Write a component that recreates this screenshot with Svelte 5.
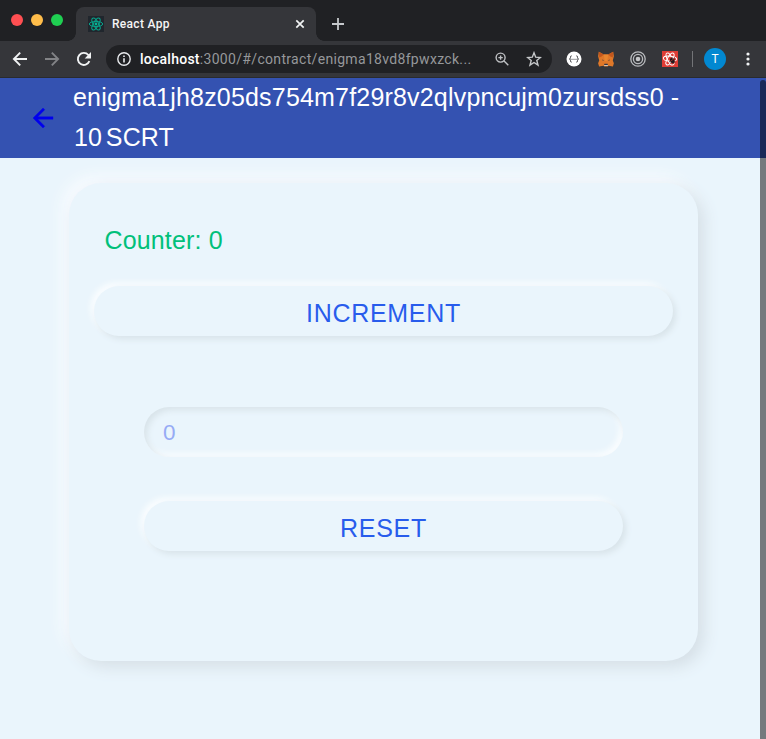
<script>
  let count = $state(0);
  let draft = $state('');
  const lights = ['#ff4f52', '#ffbd4a', '#1fcf52'];
</script>

<div class="browser">
  <div class="tabs">
    <div class="lights">
      {#each lights as color}<i style:background={color}></i>{/each}
    </div>
    <div class="tab">
      <svg class="favicon" viewBox="0 0 16 16">
        <path fill="#20262d" d="M0 0h16v16H0z" />
        <g fill="none" stroke="#08a58c" stroke-width="1">
          <ellipse cx="8" cy="8" rx="6.7" ry="2.6" />
          <ellipse cx="8" cy="8" rx="6.7" ry="2.6" transform="rotate(60 8 8)" />
          <ellipse cx="8" cy="8" rx="6.7" ry="2.6" transform="rotate(120 8 8)" />
        </g>
        <circle cx="8" cy="8" r="1.4" fill="#08b597" />
      </svg>
      <span class="tab-title">React App</span>
      <svg class="close" viewBox="0 0 10 10"><path d="m1.3 1.3 7.4 7.4m0-7.4L1.3 8.7" fill="none" stroke="#f1f3f4" stroke-width="1.7" /></svg>
    </div>
    <svg class="plus" viewBox="0 0 12 12"><path d="M6 0v12M0 6h12" stroke="#c6c9cc" stroke-width="1.8" /></svg>
  </div>

  <div class="toolbar">
    <svg class="nav" viewBox="0 0 16 16"><path d="M15 8H2.2m6-6.3L1.9 8l6.3 6.3" fill="none" stroke="#f1f3f4" stroke-width="1.9" /></svg>
    <svg class="nav" viewBox="0 0 16 16"><path d="M1 8h12.8m-6-6.3L14.1 8l-6.3 6.3" fill="none" stroke="#828386" stroke-width="1.9" /></svg>
    <svg class="nav" viewBox="0 0 16 16"><path d="M13.4 10.2A6 6 0 1 1 12.4 4l1.4 1.5" fill="none" stroke="#f1f3f4" stroke-width="1.9" /><path d="M15 1v6.4H8.7z" fill="#f1f3f4" /></svg>
    <div class="address">
      <svg class="info" viewBox="0 0 14 14"><circle cx="7" cy="7" r="6.2" fill="none" stroke="#e8eaed" stroke-width="1.4" /><path d="M7 6.2v4.3M7 3.4v1.5" stroke="#e8eaed" stroke-width="1.6" /></svg>
      <span class="url"><b>localhost</b>:3000/#/contract/enigma18vd8fpwxzck...</span>
      <svg class="zoomer" viewBox="0 0 14 14"><g fill="none" stroke="#bfc1c4" stroke-width="1.4"><circle cx="5.6" cy="5.6" r="4.5" /><path d="m8.8 8.8 4.5 4.5M5.6 3.4v4.4M3.4 5.6h4.4" /></g></svg>
      <svg class="star" viewBox="0 0 16 16"><path d="m8 1.8 1.7 4.4 4.7.3-3.6 3 1.2 4.6L8 11.5l-4 2.6 1.2-4.6-3.6-3 4.7-.3z" fill="none" stroke="#c6c8ca" stroke-width="1.4" /></svg>
    </div>
    <div class="extensions">
      <svg viewBox="0 0 16 16"><circle cx="8" cy="8" r="7.5" fill="#fff" /><path d="M5.7 4.8q-1.4 0-1.2 1.5.2 1.5-1.1 1.7 1.3.2 1.1 1.7-.2 1.5 1.2 1.5m4.6-6.4q1.4 0 1.2 1.5-.2 1.5 1.1 1.7-1.3.2-1.1 1.7.2 1.5-1.2 1.5" fill="none" stroke="#35363a" stroke-width=".9" /><path d="M5.5 8.3h5" stroke="#35363a" stroke-dasharray="1 1" /></svg>
      <svg viewBox="0 0 16 16">
        <path fill="#df7829" d="m.8.8 5 2.7h4.4l5-2.7.7 4.4-1.1 4.2 1.1 2.8-1 3.2-4.3-.7-1 .8H6.4l-1-.8-4.3.7-1-3.2 1.1-2.8L.1 5.2z" />
        <path fill="#c3571d" d="m.8.8 5 2.7-2.2 2-2.4 1zm14.4 0-5 2.7 2.2 2 2.4 1z" />
        <path fill="#e9862f" d="M5.8 3.5h4.4L9.4 10H6.6z" />
        <path fill="#303747" d="m4.3 8.4 2 1-1.8.2zm7.4 0-2 1 1.8.2zM6.4 12.8h3.2l.3 1.3H6.1z" />
        <path fill="#d5c6b8" d="M5.9 14h4.2l-.5 1.1H6.4z" />
      </svg>
      <svg viewBox="0 0 16 16"><g fill="none" stroke="#b9bbbe" stroke-width="1.3"><circle cx="8" cy="8" r="7.2" /><circle cx="8" cy="8" r="4.6" /></g><circle cx="8" cy="8" r="2.3" fill="#c5c6c8" /></svg>
      <svg viewBox="0 0 16 16">
        <path fill="#df3d35" d="M0 0h16v16H0z" />
        <g fill="none" stroke="#fff" stroke-width="1"><ellipse cx="8" cy="7.7" rx="6.7" ry="2.5" transform="rotate(5 8 8)" /><ellipse cx="8" cy="8" rx="6.7" ry="2.5" transform="rotate(62 8 8)" /><ellipse cx="8" cy="8" rx="6.7" ry="2.5" transform="rotate(120 8 8)" /></g>
        <path d="m7.8 7.5 5.4 4M12.6 6.4l-4.2 6.2M7.3 10.5l5.7-1.8M9.7 6l1.6 7" stroke="#35191a" stroke-width=".8" />
        <ellipse cx="10.3" cy="9.7" rx="1.9" ry="2.8" transform="rotate(-35 10.3 9.7)" fill="#241719" /><path d="m8.7 10 3-2" stroke="#df3d35" stroke-width=".6" />
      </svg>
    </div>
    <i class="divider"></i>
    <div class="avatar">T</div>
    <svg class="menu" viewBox="0 0 4 14"><g fill="#f1f3f4"><circle cx="2" cy="2" r="1.6" /><circle cx="2" cy="7" r="1.6" /><circle cx="2" cy="12" r="1.6" /></g></svg>
  </div>

  <div class="page">
    <header>
      <svg class="back" viewBox="0 0 24 24"><path d="M20 11H7.83l5.59-5.59L12 4l-8 8 8 8 1.41-1.41L7.83 13H20z" fill="#0000ee" stroke="#0000ee" stroke-width=".3" /></svg>
      <h1><span class="account">enigma1jh8z05ds754m7f29r8v2qlvpncujm0zursdss0 -</span><br /><span class="balance">10 SCRT</span></h1>
    </header>
    <main>
      <section class="card">
        <p class="counter">Counter: {count}</p>
        <button class="increment" onclick={() => count++}>INCREMENT</button>
        <div class="form">
          <input placeholder="0" bind:value={draft} />
          <button class="reset" onclick={() => (count = Number(draft) || 0)}>RESET</button>
        </div>
      </section>
    </main>
    <i class="scrollbar"></i>
  </div>
</div>

<style>
  :global(body) { background: #eaf5fc; overflow: hidden; }
  * { box-sizing: border-box; }
  svg { display: block; flex: none; }
  .browser { width: 766px; height: 739px; display: flex; flex-direction: column; overflow: hidden; font-family: "Liberation Sans", Arial, sans-serif; }
  .tabs { height: 41px; background: #202124; display: flex; flex: none; }
  .lights { display: flex; gap: 8px; padding: 14px 0 0 11px; width: 76px; flex: none; }
  .lights i { width: 12px; height: 12px; border-radius: 50%; }
  .tab { position: relative; width: 240px; margin-top: 7px; height: 34px; background: #35363a; border-radius: 8px 8px 0 0; display: flex; align-items: center; padding: 0 11px 0 12px; }
  .tab::before, .tab::after { content: ""; position: absolute; bottom: 0; width: 8px; height: 8px; }
  .tab::before { left: -8px; background: radial-gradient(circle at 0 0, transparent 7.5px, #35363a 8px); }
  .tab::after { right: -8px; background: radial-gradient(circle at 100% 0, transparent 7.5px, #35363a 8px); }
  .favicon { width: 16px; height: 16px; }
  .tab-title { margin-left: 8px; font: 500 12px/16px Roboto, sans-serif; color: #f5f5f6; letter-spacing: .3px; }
  .close { width: 10px; height: 10px; margin-left: auto; }
  .plus { width: 12px; height: 12px; margin: 18px 0 0 16px; }
  .toolbar { height: 37px; background: #35363a; border-bottom: 1px solid #292b2e; display: flex; align-items: center; padding-left: 12px; flex: none; }
  .nav { width: 16px; height: 16px; margin-right: 16px; }
  .address { width: 446px; height: 28px; margin-left: -2px; border-radius: 14px; background: #202124; display: flex; align-items: center; padding: 0 10px 0 11px; }
  .info { width: 14px; height: 14px; }
  .url { margin-left: 9px; font: 14px/20px Roboto, sans-serif; letter-spacing: .32px; color: #96989b; white-space: nowrap; }
  .url b { color: #fff; font-weight: 500; letter-spacing: .25px; }
  .zoomer { width: 14px; height: 14px; margin-left: auto; }
  .star { width: 16px; height: 16px; margin-left: 17px; }
  .extensions { display: flex; gap: 16px; margin-left: 14px; }
  .extensions svg { width: 16px; height: 16px; }
  .divider { width: 1px; height: 16px; background: #737477; margin-left: 14px; }
  .avatar { width: 22px; height: 22px; border-radius: 50%; margin-left: 11px; background: #0288d1; color: #fff; font: 12px/22px Roboto, sans-serif; text-align: center; }
  .menu { width: 4px; height: 14px; margin-left: 19.5px; }
  .page { position: relative; flex: 1; display: flex; flex-direction: column; background: #eaf5fc; }
  header { height: 80px; background: #3452b1; display: flex; align-items: center; padding-left: 28px; color: #fff; flex: none; }
  .back { width: 30px; height: 30px; }
  h1 { margin: 0 0 0 15px; padding-bottom: 2px; font-size: 25px; line-height: 40px; font-weight: 400; white-space: nowrap; }
  .account { letter-spacing: .1875px; }
  .balance { word-spacing: -3.2px; letter-spacing: .1px; margin-left: 1px; }
  main { flex: 1; padding: 25px 68px 78px 69px; display: flex; }
  .card { flex: 1; border-radius: 32px; background: #eaf5fc; box-shadow: 6px 6px 16px #d5dfe6, -6px -6px 16px #fafcff; display: flex; flex-direction: column; padding: 0 25px; }
  .counter { margin: 37px 0 0 10.5px; height: 40px; color: #00c07a; font-size: 25px; line-height: 40px; letter-spacing: .15px; }
  button { height: 50px; border: 0; border-radius: 25px; padding: 3px 0 0; background: #eaf5fc; color: #285cec; font: 25px/40px "Liberation Sans", Arial, sans-serif; letter-spacing: .7px; box-shadow: 3px 3px 6px #d8e3e9, -3px -3px 6px #fcfeff; }
  .increment { margin-top: 26px; }
  .form { display: flex; flex-direction: column; gap: 44px; margin: 71px 50px 0; }
  input { display: block; width: 100%; height: 50px; border: 0; border-radius: 25px; padding: 1px 19px 0; outline: none; background: transparent; color: #285cec; font: 22.5px "Liberation Sans", Arial, sans-serif; box-shadow: inset 3px 3px 6px #d8e3e9, inset -3px -3px 6px #fcfeff; }
  input::placeholder { color: #96abf5; opacity: 1; }
  .scrollbar { position: absolute; top: 2px; right: 0; bottom: 0; width: 6px; background: rgba(0, 0, 0, .5); border-radius: 3px 3px 0 0; }
</style>
